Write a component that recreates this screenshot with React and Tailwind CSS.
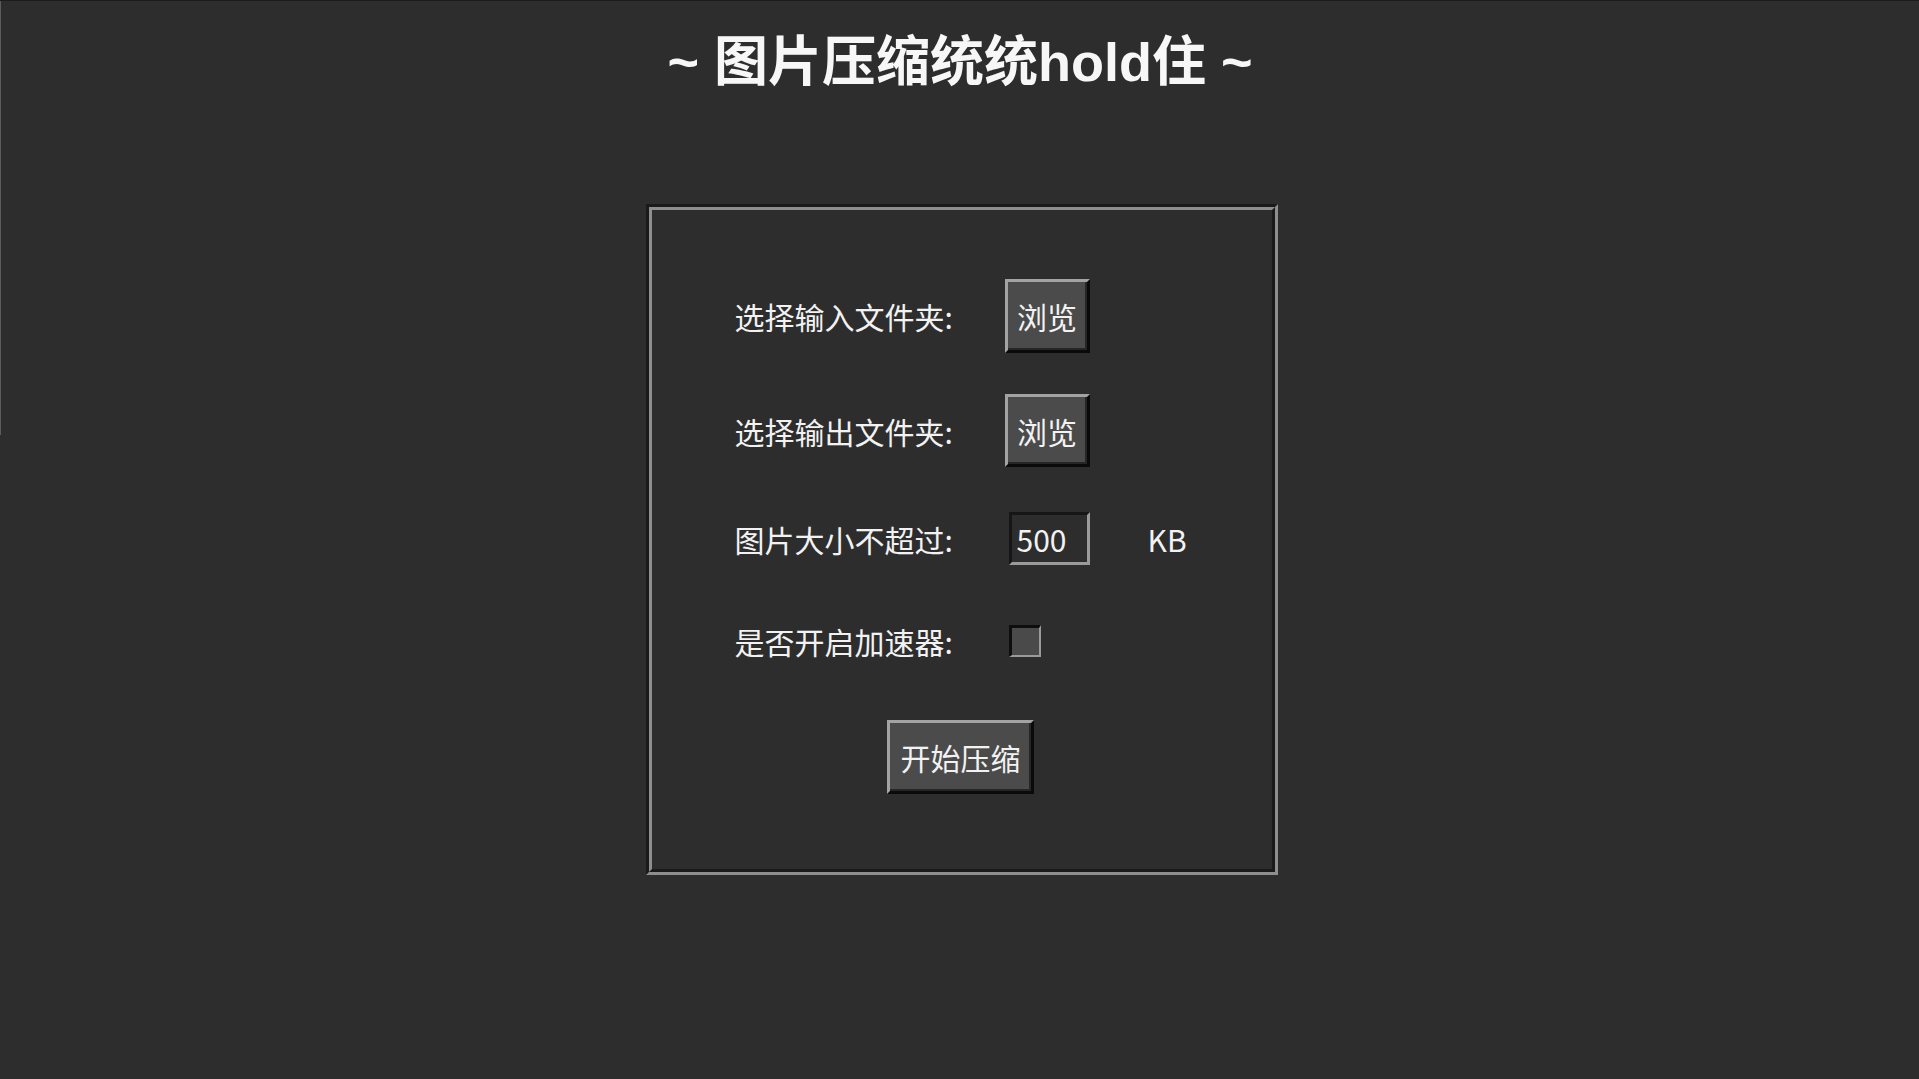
import { useState } from "react";

const cjk = "font-['Noto_Sans_CJK_SC','Noto_Sans',sans-serif]";

function RaisedButton({ className = "", children }) {
  return (
    <button
      className={`flex items-center justify-center bg-[#4b4b4b] text-[30px] leading-none text-[#f2f2f2] border-t-[3px] border-l-[3px] border-t-[#a3a3a3] border-l-[#a3a3a3] border-b-[3px] border-r-[3px] border-b-[#0a0a0a] border-r-[#0a0a0a] shadow-[inset_-2px_-2px_0_#262626] ${cjk} ${className}`}
    >
      {children}
    </button>
  );
}

function Row({ label, className = "", children }) {
  return (
    <div className={`flex items-center ${className}`}>
      <div className={`w-[270px] text-[30px] leading-none text-[#f2f2f2] ${cjk}`}>{label}</div>
      <div className="flex items-center">{children}</div>
    </div>
  );
}

export default function App() {
  const [size, setSize] = useState("500");
  const [turbo, setTurbo] = useState(false);

  return (
    <div className="flex min-h-screen w-full border-t border-[#1c1c1c] bg-[#2d2d2d]">
      <div className="h-[434px] w-px shrink-0 bg-[#5c5c5c]" />
      <div className="flex flex-1 flex-col items-center">
        <h1
          className="mt-[34px] text-[54px] leading-[54px] font-bold text-[#f7f7f7] font-['Liberation_Sans','Noto_Sans_CJK_SC',sans-serif]"
        >
          ~ 图片压缩统统hold住 ~
        </h1>

        {/* groove frame */}
        <div className="ml-[3px] mt-[115px] h-[671px] w-[632px] border-[3px] border-t-[#1a1a1a] border-l-[#1a1a1a] border-b-[#8e8e8e] border-r-[#8e8e8e]">
          <div className="flex h-full w-full flex-col border-[3px] border-t-[#8e8e8e] border-l-[#8e8e8e] border-b-[#1a1a1a] border-r-[#1a1a1a] pl-[83px] pt-[69px]">
            <Row label="选择输入文件夹:" className="h-[74px]">
              <RaisedButton className="h-[74px] w-[85px]">浏览</RaisedButton>
            </Row>
            <Row label="选择输出文件夹:" className="mt-[41px] h-[73px]">
              <RaisedButton className="h-[73px] w-[85px]">浏览</RaisedButton>
            </Row>
            <Row label="图片大小不超过:" className="mt-[45px] h-[53px]">
              <input
                value={size}
                onChange={(e) => setSize(e.target.value)}
                className={`ml-[4px] h-[53px] w-[81px] bg-[#2d2d2d] pl-[5px] text-[30px] text-[#f2f2f2] outline-none border-t-[3px] border-l-[3px] border-t-[#161616] border-l-[#161616] border-b-[3px] border-r-[3px] border-b-[#9a9a9a] border-r-[#9a9a9a] ${cjk}`}
              />
              <span className={`ml-[58px] text-[30px] leading-none text-[#f2f2f2] ${cjk}`}>KB</span>
            </Row>
            <Row label="是否开启加速器:" className="mt-[60px] h-[32px]">
              <button
                onClick={() => setTurbo(!turbo)}
                className="ml-[4px] h-[32px] w-[32px] bg-[#4a4a4a] border-t-[3px] border-l-[3px] border-t-[#0e0e0e] border-l-[#0e0e0e] border-b-[2px] border-r-[2px] border-b-[#9a9a9a] border-r-[#9a9a9a]"
              />
            </Row>
            <div className="mt-[63px] flex justify-center pr-[85px]">
              <RaisedButton className="h-[74px] w-[147px]">开始压缩</RaisedButton>
            </div>
          </div>
        </div>
      </div>
    </div>
  );
}
